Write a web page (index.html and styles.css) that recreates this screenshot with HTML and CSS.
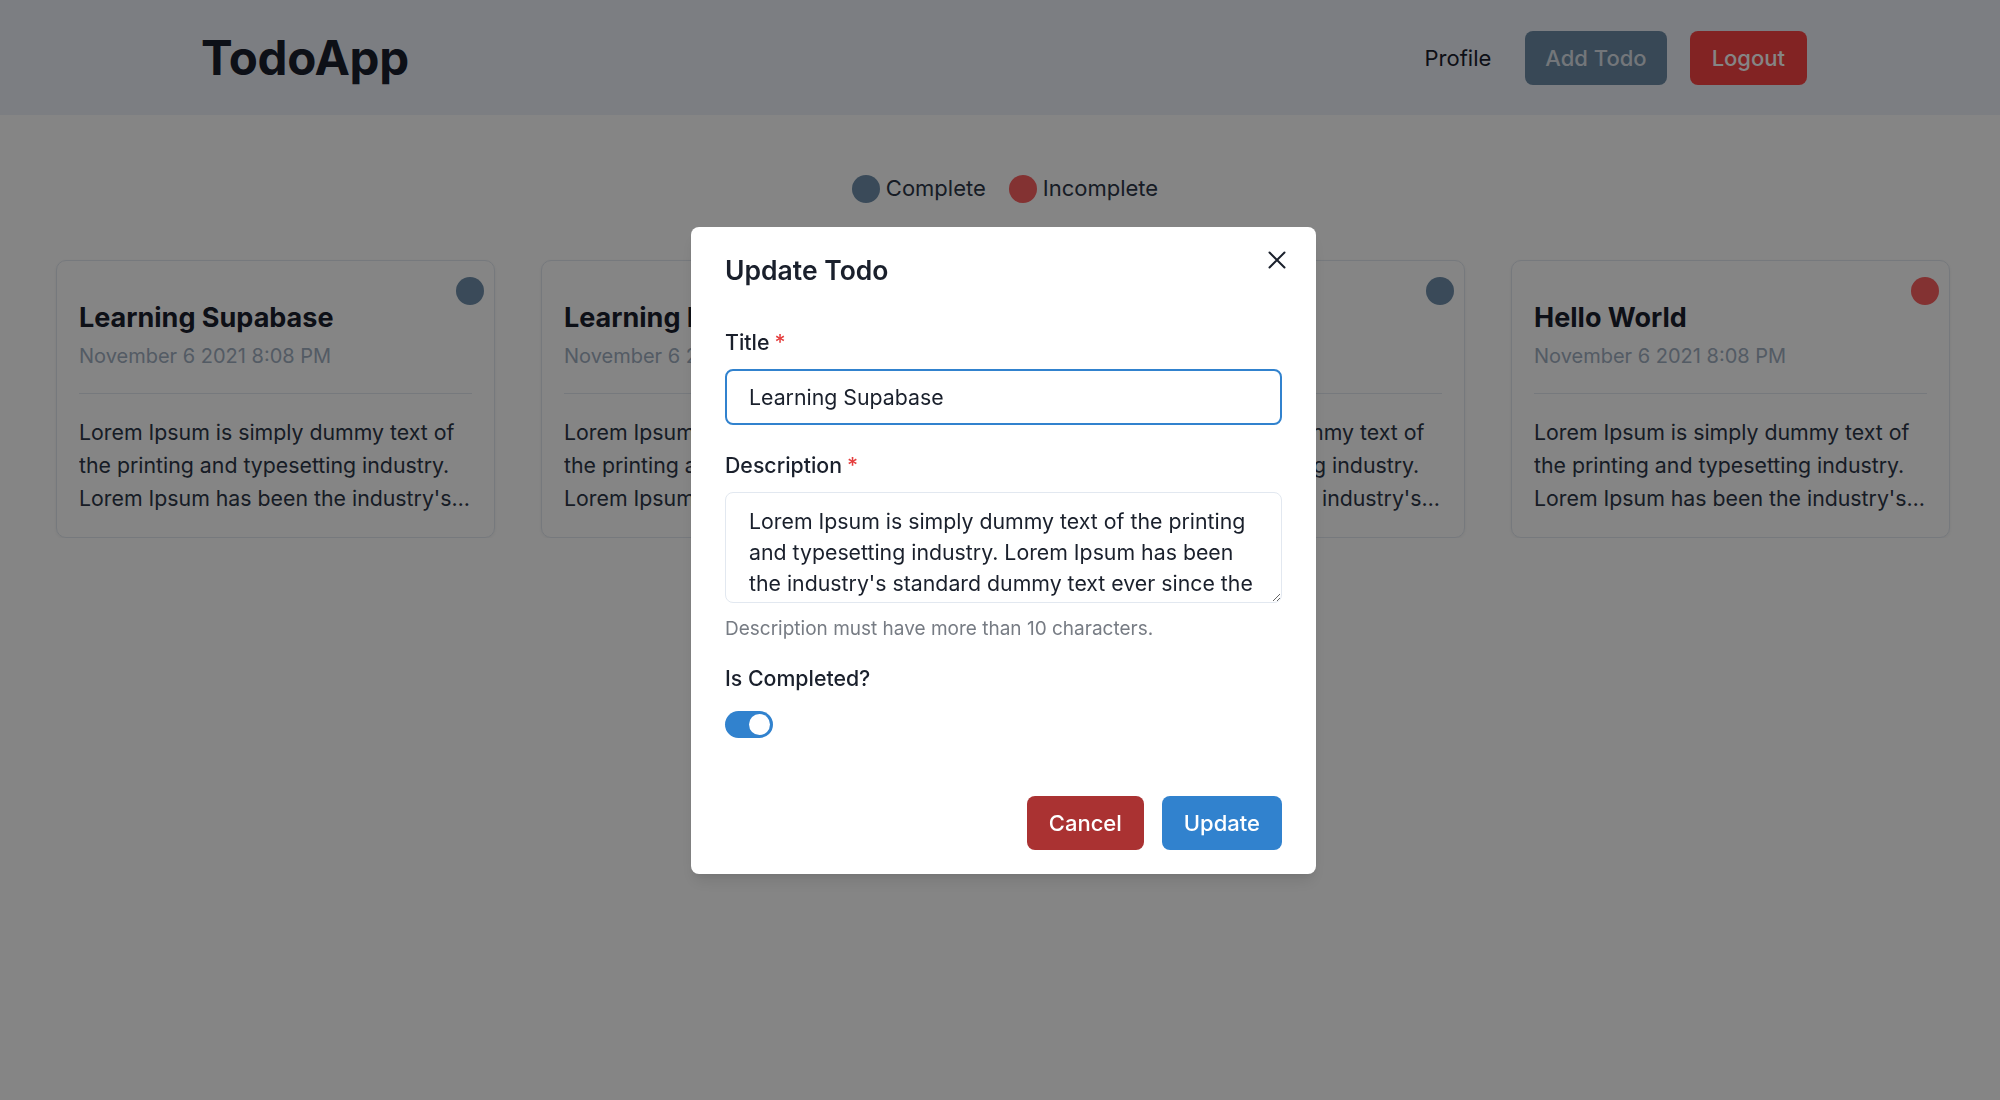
FILE: index.html
```html
<!DOCTYPE html>
<html lang="en">
<head>
<meta charset="utf-8">
<title>TodoApp</title>
<link rel="stylesheet" href="styles.css">
</head>
<body>
<header class="header">
  <div class="header-inner">
    <h1 class="brand">TodoApp</h1>
    <nav class="nav">
      <a class="nav-link">Profile</a>
      <button class="btn btn-primary">Add Todo</button>
      <button class="btn btn-danger">Logout</button>
    </nav>
  </div>
</header>

<main>
  <div class="legend">
    <div class="legend-item"><span class="dot dot-complete"></span>Complete</div>
    <div class="legend-item"><span class="dot dot-incomplete"></span>Incomplete</div>
  </div>

  <div class="cards">
    <article class="card">
      <span class="dot dot-complete card-status"></span>
      <h2 class="card-title">Learning Supabase</h2>
      <div class="card-date">November 6 2021 8:08 PM</div>
      <hr class="card-divider">
      <p class="card-text">Lorem Ipsum is simply dummy text of the printing and typesetting industry. Lorem Ipsum has been the industry's standard dummy text ever since the 1500s.</p>
    </article>
    <article class="card">
      <span class="dot dot-complete card-status"></span>
      <h2 class="card-title">Learning Next.js</h2>
      <div class="card-date">November 6 2021 8:08 PM</div>
      <hr class="card-divider">
      <p class="card-text">Lorem Ipsum is simply dummy text of the printing and typesetting industry. Lorem Ipsum has been the industry's standard dummy text ever since the 1500s.</p>
    </article>
    <article class="card">
      <span class="dot dot-complete card-status"></span>
      <h2 class="card-title">Learning Chakra</h2>
      <div class="card-date">November 6 2021 8:08 PM</div>
      <hr class="card-divider">
      <p class="card-text">Lorem Ipsum is simply dummy text of the printing and typesetting industry. Lorem Ipsum has been the industry's standard dummy text ever since the 1500s.</p>
    </article>
    <article class="card">
      <span class="dot dot-incomplete card-status"></span>
      <h2 class="card-title">Hello World</h2>
      <div class="card-date">November 6 2021 8:08 PM</div>
      <hr class="card-divider">
      <p class="card-text">Lorem Ipsum is simply dummy text of the printing and typesetting industry. Lorem Ipsum has been the industry's standard dummy text ever since the 1500s.</p>
    </article>
  </div>
</main>

<div class="overlay">
  <section class="modal">
    <h2 class="modal-header">Update Todo</h2>
    <button class="close" aria-label="Close">
      <svg width="18" height="18" viewBox="0 0 18 18"><path d="M1.5 1.5L16.5 16.5M16.5 1.5L1.5 16.5" stroke="#1a202c" stroke-width="2" stroke-linecap="round" fill="none"/></svg>
    </button>
    <div class="modal-body">
      <div class="field">
        <label class="label">Title<span class="req">*</span></label>
        <input class="input" type="text" value="Learning Supabase">
      </div>
      <div class="field field-desc">
        <label class="label">Description<span class="req">*</span></label>
        <textarea class="textarea">Lorem Ipsum is simply dummy text of the printing and typesetting industry. Lorem Ipsum has been the industry's standard dummy text ever since the 1500s, when an unknown printer took a galley of type and scrambled it to make a type specimen book.</textarea>
        <div class="helper">Description must have more than 10 characters.</div>
      </div>
      <div class="field field-switch">
        <label class="label">Is Completed?</label>
        <span class="switch"><span class="thumb"></span></span>
      </div>
    </div>
    <footer class="modal-footer">
      <button class="btn btn-cancel">Cancel</button>
      <button class="btn btn-update">Update</button>
    </footer>
  </section>
</div>
</body>
</html>
```

FILE: styles.css
```css
* { box-sizing: border-box; }

body {
  margin: 0;
  font-family: Inter, "Noto Sans", "Liberation Sans", sans-serif;
  color: #1a202c;
  background: #ffffff;
}

.header {
  height: 115px;
  background: #eef2f9;
}

.header-inner {
  width: 1606px;
  height: 100%;
  margin-left: 201px;
  display: flex;
  align-items: center;
  justify-content: space-between;
}

.brand {
  margin: 0;
  font-size: 47.5px;
  font-weight: 700;
  letter-spacing: -0.3px;
  color: #1a202c;
}

.nav {
  display: flex;
  align-items: center;
  gap: 23px;
}

.nav-link {
  font-size: 22px;
  color: #1a202c;
  margin-right: 11px;
}

.btn {
  height: 54px;
  padding: 0 22px;
  border: none;
  border-radius: 8px;
  font-family: inherit;
  font-size: 22px;
  font-weight: 500;
  cursor: pointer;
}

.btn-primary {
  padding: 0 20px;
  background: #6b8aa5;
  color: #dde3ea;
}

.btn-danger {
  background: #fa4444;
  color: #ffffff;
}

.legend {
  display: flex;
  justify-content: center;
  align-items: center;
  gap: 23px;
  margin-top: 57px;
  padding-left: 10px;
  font-size: 22px;
  line-height: 33px;
  color: #2d3748;
}

.legend-item {
  display: flex;
  align-items: center;
  gap: 6px;
}

.dot {
  display: inline-block;
  width: 28px;
  height: 28px;
  border-radius: 50%;
}

.dot-complete { background: #6f8fab; }
.dot-incomplete { background: #fc6060; }

.cards {
  display: grid;
  grid-template-columns: repeat(4, 439px);
  gap: 46px;
  margin: 55px 0 0 56px;
}

.card {
  position: relative;
  border: 1px solid #e2e8f0;
  border-radius: 10px;
  padding: 41px 22px 22px;
  box-shadow: 0 1px 3px rgba(0, 0, 0, 0.06);
}

.card-status {
  position: absolute;
  top: 16px;
  right: 10px;
}

.card-title {
  margin: 0;
  font-size: 27px;
  line-height: 32px;
  font-weight: 700;
  color: #1a202c;
}

.card-date {
  margin-top: 7px;
  font-size: 20px;
  line-height: 30px;
  color: #a0aec0;
}

.card-divider {
  border: 0;
  border-top: 1px solid #e2e8f0;
  margin: 22px 0;
}

.card-text {
  margin: 0;
  font-size: 21.3px;
  line-height: 33px;
  color: #2d3748;
  display: -webkit-box;
  -webkit-line-clamp: 3;
  -webkit-box-orient: vertical;
  overflow: hidden;
}

.overlay {
  position: fixed;
  inset: 0;
  background: rgba(0, 0, 0, 0.48);
  display: flex;
  justify-content: center;
  align-items: flex-start;
  padding-top: 227px;
  padding-left: 7px;
}

.modal {
  position: relative;
  width: 625px;
  background: #ffffff;
  border-radius: 8px;
  box-shadow: 0 10px 15px -3px rgba(0, 0, 0, 0.1), 0 4px 6px -2px rgba(0, 0, 0, 0.05);
}

.modal-header {
  margin: 0;
  padding: 24px 34px 16px;
  font-size: 26.5px;
  line-height: 39px;
  font-weight: 600;
  color: #1a202c;
}

.close {
  position: absolute;
  top: 11px;
  right: 17px;
  width: 44px;
  height: 44px;
  display: flex;
  align-items: center;
  justify-content: center;
  background: none;
  border: 0;
  padding: 0;
}

.modal-body {
  padding: 21px 34px 36px;
}

.field-desc { margin-top: 25px; }
.field-switch { margin-top: 20px; }

.label {
  display: block;
  font-size: 21.3px;
  line-height: 31px;
  font-weight: 500;
  margin-bottom: 11px;
  color: #1a202c;
}

.req {
  color: #e53e3e;
  margin-left: 5px;
}

.input {
  display: block;
  width: 100%;
  height: 56px;
  border: 2px solid #3182ce;
  border-radius: 8px;
  padding: 0 22px;
  font-family: inherit;
  font-size: 21.3px;
  color: #1a202c;
  outline: none;
}

.textarea {
  display: block;
  width: 100%;
  height: 111px;
  border: 1px solid #e2e8f0;
  border-radius: 8px;
  padding: 13px 21px 13px 23px;
  font-family: inherit;
  font-size: 21.3px;
  line-height: 31px;
  color: #1a202c;
  resize: vertical;
  overflow: hidden;
}

.helper {
  margin-top: 12px;
  font-size: 19px;
  line-height: 28px;
  color: #777c84;
}

.switch {
  display: flex;
  justify-content: flex-end;
  width: 48px;
  height: 27px;
  margin-top: 17px;
  padding: 3px;
  border-radius: 14px;
  background: #3182ce;
}

.field-switch .label { margin-bottom: 0; }

.thumb {
  width: 21px;
  height: 21px;
  border-radius: 50%;
  background: #ffffff;
}

.modal-footer {
  display: flex;
  justify-content: flex-end;
  gap: 18px;
  padding: 22px 34px 24px;
}

.btn-cancel {
  background: #aa3232;
  color: #ffffff;
}

.btn-update {
  background: #3182ce;
  color: #ffffff;
}
```
